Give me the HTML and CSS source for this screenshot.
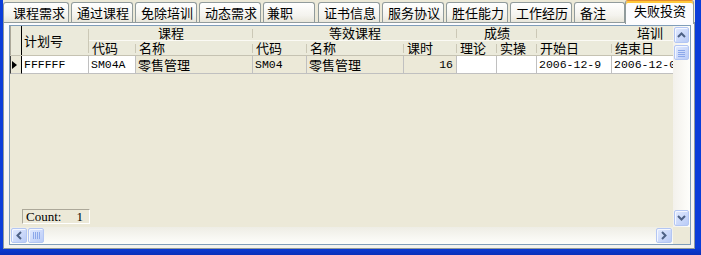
FILE: index.html
```html
<!DOCTYPE html>
<html lang="zh-CN">
<head>
    <meta charset="UTF-8">
    <title>培训记录</title>
    <link rel="stylesheet" href="styles.css">
</head>
<body>
    <div class="window">
        <div class="tabs">
            <div class="tab tab-first">课程需求</div>
            <div class="tab">通过课程</div>
            <div class="tab">免除培训</div>
            <div class="tab">动态需求</div>
            <div class="tab tab-short">兼职</div>
            <div class="tab">证书信息</div>
            <div class="tab">服务协议</div>
            <div class="tab">胜任能力</div>
            <div class="tab">工作经历</div>
            <div class="tab tab-short tab-last">备注</div>
            <div class="tab tab-active">失败投资</div>
        </div>

        <div class="panel">
            <div class="dbgrid">
                <div class="grid-data">
                    <div class="grid-head">
                        <div class="ind"></div>
                        <div class="hcell h-plan col-plan">计划号</div>
                        <div class="hgroup">
                            <div class="hcell hg-title">课程</div>
                            <div class="hg-subs">
                                <div class="hcell col-code">代码</div>
                                <div class="hcell col-cname">名称</div>
                            </div>
                        </div>
                        <div class="hgroup">
                            <div class="hcell hg-title">等效课程</div>
                            <div class="hg-subs">
                                <div class="hcell col-ecode">代码</div>
                                <div class="hcell col-ename">名称</div>
                                <div class="hcell col-hours">课时</div>
                            </div>
                        </div>
                        <div class="hgroup">
                            <div class="hcell hg-title">成绩</div>
                            <div class="hg-subs">
                                <div class="hcell col-theory">理论</div>
                                <div class="hcell col-practice">实操</div>
                            </div>
                        </div>
                        <div class="hgroup">
                            <div class="hcell hg-title">培训</div>
                            <div class="hg-subs">
                                <div class="hcell col-date">开始日</div>
                                <div class="hcell col-date">结束日</div>
                                <div class="hcell col-place">地点</div>
                            </div>
                        </div>
                    </div>

                    <div class="grid-row">
                        <div class="ind"><span class="pointer"></span></div>
                        <div class="cell num col-plan">FFFFFF</div>
                        <div class="cell num col-code">SM04A</div>
                        <div class="cell ro col-cname">零售管理</div>
                        <div class="cell ro num col-ecode">SM04</div>
                        <div class="cell ro col-ename">零售管理</div>
                        <div class="cell ro num right col-hours">16</div>
                        <div class="cell col-theory"></div>
                        <div class="cell col-practice"></div>
                        <div class="cell num col-date">2006-12-9</div>
                        <div class="cell num col-date">2006-12-09</div>
                        <div class="cell col-place"></div>
                    </div>

                    <div class="count">Count:<span class="count-num">1</span></div>
                </div>

                <div class="vscroll">
                    <div class="sb-btn">
                        <svg width="9" height="6" viewBox="0 0 9 6"><polyline points="1,5 4.5,1.5 8,5" fill="none" stroke="#4d6185" stroke-width="2"/></svg>
                    </div>
                    <div class="sb-btn sb-thumb">
                        <svg width="7" height="8" viewBox="0 0 7 8"><path d="M0 1.5h7M0 3.5h7M0 5.5h7M0 7.5h7" stroke="#8ca8ea" stroke-width="1"/></svg>
                    </div>
                    <div class="sb-btn sb-end">
                        <svg width="9" height="6" viewBox="0 0 9 6"><polyline points="1,1 4.5,4.5 8,1" fill="none" stroke="#4d6185" stroke-width="2"/></svg>
                    </div>
                </div>

                <div class="hscroll">
                    <div class="sb-btn">
                        <svg width="6" height="9" viewBox="0 0 6 9"><polyline points="5,1 1.5,4.5 5,8" fill="none" stroke="#4d6185" stroke-width="2"/></svg>
                    </div>
                    <div class="sb-btn sb-thumb">
                        <svg width="8" height="7" viewBox="0 0 8 7"><path d="M1.5 0v7M3.5 0v7M5.5 0v7M7.5 0v7" stroke="#8ca8ea" stroke-width="1"/></svg>
                    </div>
                    <div class="sb-btn sb-end">
                        <svg width="6" height="9" viewBox="0 0 6 9"><polyline points="1,1 4.5,4.5 1,8" fill="none" stroke="#4d6185" stroke-width="2"/></svg>
                    </div>
                </div>

                <div class="corner"></div>
            </div>
        </div>
    </div>
</body>
</html>
```

FILE: styles.css
```css
body {
    margin: 0;
    height: 255px;
    background: linear-gradient(#0b3dd9 97%, #0a2fb8);
    font-family: "Noto Sans CJK SC", sans-serif;
    font-size: 13px;
    color: #000;
    overflow: hidden;
}
.window {
    margin-left: 3px;
    width: 692px;
    height: 249px;
    background: #ece9d8;
    display: flex;
    flex-direction: column;
}

/* tab strip */
.tabs {
    flex: none;
    height: 22px;
    display: flex;
    align-items: flex-end;
}
.tab {
    box-sizing: border-box;
    flex: none;
    width: 62px;
    height: 20px;
    margin-right: 2px;
    padding-left: 5px;
    border: 1px solid #919b9c;
    border-bottom: none;
    border-radius: 3px 3px 0 0;
    background: linear-gradient(#ffffff, #f4f3ee 65%, #e8e6da);
    line-height: 19px;
    white-space: nowrap;
}
.tab-first {
    width: 66px;
    padding-left: 9px;
}
.tab-short {
    width: 52px;
    margin-right: 3px;
    padding-left: 3px;
}
.tab-last {
    width: 51px;
    margin-right: 0;
    padding-left: 5px;
}
.tab-active {
    position: relative;
    z-index: 1;
    width: 69px;
    height: 24px;
    margin: 0 0 -2px 0;
    padding-left: 8px;
    border-top: 1px solid #e68b2c;
    box-shadow: inset 0 2px #ffc83c;
    background: #fcfcfe;
    line-height: 20px;
}

/* page body */
.panel {
    flex: 1;
    box-sizing: border-box;
    border: 1px solid #919b9c;
    background: linear-gradient(#fcfcfe, #f4f3ee);
    padding: 2px 3px 3px 5px;
    display: flex;
}
.dbgrid {
    flex: 1;
    border: 1px solid #7f9db9;
    background: #ece9d8;
    display: grid;
    grid-template-columns: 1fr 17px;
    grid-template-rows: 1fr 17px;
    min-width: 0;
}
.grid-data {
    min-width: 0;
    overflow: hidden;
    display: flex;
    flex-direction: column;
}

/* header */
.grid-head {
    flex: none;
    display: flex;
    height: 30px;
    box-sizing: border-box;
    border-bottom: 1px solid #c5c2b2;
    background: #ebeadb;
}
.ind {
    flex: none;
    box-sizing: border-box;
    width: 12px;
    border-left: 1px solid #aca899;
    border-right: 1px solid #000;
}
.hcell {
    position: relative;
    box-sizing: border-box;
    flex: none;
    padding-left: 3px;
    line-height: 14px;
    white-space: nowrap;
}
.hcell::after {
    content: "";
    position: absolute;
    right: 0;
    top: 3px;
    bottom: 2px;
    width: 1px;
    background: #cbc8b6;
}
.h-plan {
    display: flex;
    align-items: center;
    padding-left: 2px;
}
.hgroup {
    flex: none;
    display: flex;
    flex-direction: column;
}
.hg-title {
    height: 15px;
    border-bottom: 1px solid #fbfaf5;
    padding-left: 0;
    text-align: center;
}
.hg-subs {
    display: flex;
    height: 14px;
}

/* column widths */
.col-plan { width: 67px; }
.col-code { width: 47px; }
.col-cname { width: 117px; }
.col-ecode { width: 54px; }
.col-ename { width: 97px; }
.col-hours { width: 53px; }
.col-theory { width: 40px; }
.col-practice { width: 40px; }
.col-date { width: 75px; }
.col-place { width: 76px; }

/* data row */
.grid-row {
    flex: none;
    display: flex;
    height: 18px;
}
.grid-row .ind {
    border-left-color: #3c3c3c;
    border-bottom: 1px solid #c0c0c0;
    background: #ece9d8;
    display: flex;
    align-items: center;
    padding-left: 1px;
}
.pointer {
    width: 0;
    height: 0;
    border-left: 5px solid #000;
    border-top: 4px solid transparent;
    border-bottom: 4px solid transparent;
}
.cell {
    flex: none;
    box-sizing: border-box;
    height: 18px;
    border-right: 1px solid #c0c0c0;
    border-bottom: 1px solid #c0c0c0;
    background: #fff;
    padding-left: 2px;
    line-height: 17px;
    white-space: nowrap;
    overflow: hidden;
}
.cell.ro {
    background: #ece9d8;
}
.cell.num {
    font-family: "Liberation Mono", monospace;
    font-size: 11.5px;
}
.cell.right {
    text-align: right;
    padding-right: 3px;
}

.count {
    margin: auto 0 3px 12px;
    width: 68px;
    height: 15px;
    box-sizing: border-box;
    border: 1px solid;
    border-color: #aca899 #fff #fff #aca899;
    padding-left: 3px;
    font-family: "Liberation Serif", serif;
    font-size: 13px;
    line-height: 13px;
    white-space: nowrap;
}
.count-num {
    margin-left: 15px;
}

/* scroll bars */
.vscroll {
    background: linear-gradient(90deg, #f3f1ec, #fefefb);
    display: flex;
    flex-direction: column;
    align-items: center;
    padding: 1px 0;
}
.hscroll {
    background: linear-gradient(#eeede5, #fefefb);
    display: flex;
    align-items: center;
    padding: 0 1px;
}
.sb-btn {
    box-sizing: border-box;
    width: 15px;
    height: 16px;
    border: 1px solid #b3c6f3;
    border-radius: 2px;
    background: linear-gradient(135deg, #e2eafe, #b9cbf7);
    box-shadow: inset 1px 1px #f4f7ff;
    display: flex;
    align-items: center;
    justify-content: center;
}
.vscroll .sb-thumb {
    margin-top: 2px;
    height: 15px;
}
.hscroll .sb-btn {
    width: 16px;
    height: 15px;
}
.hscroll .sb-thumb {
    margin-left: 1px;
}
.vscroll .sb-end {
    margin-top: auto;
}
.hscroll .sb-end {
    margin-left: auto;
}
.corner {
    background: #ece9d8;
}
```
